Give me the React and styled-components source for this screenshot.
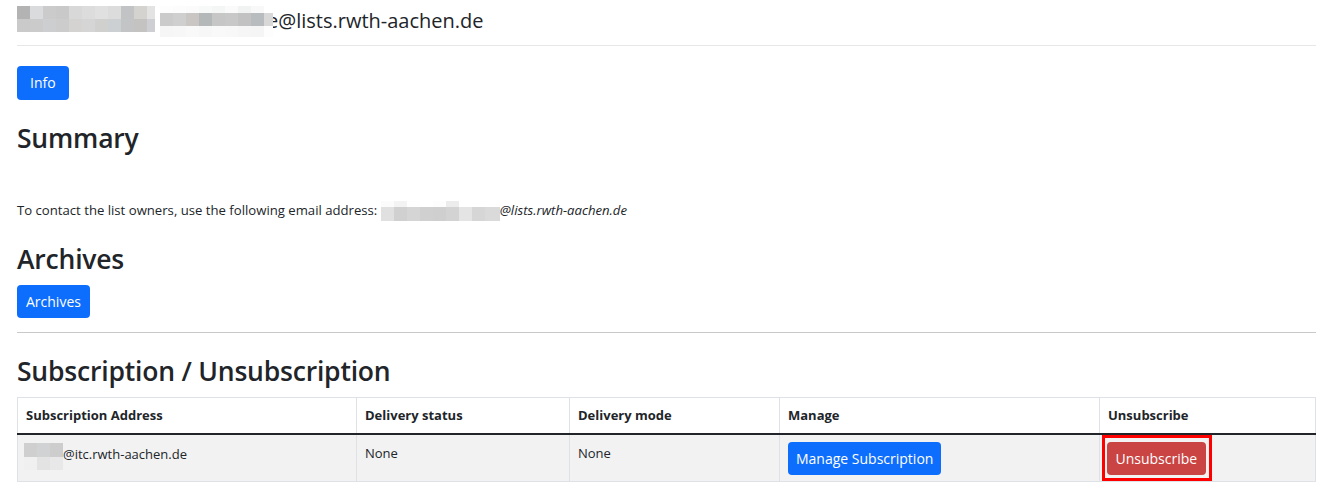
import React from "react";
import styled, { createGlobalStyle } from "styled-components";

const FONT = `"Open Sans", "Noto Sans", "Liberation Sans", sans-serif`;

const GlobalStyle = createGlobalStyle`
  html, body { margin: 0; padding: 0; background: #fff; }
  body {
    font-family: ${FONT};
    color: #212529;
    font-size: 14px;
    line-height: 1.5;
  }
  * { box-sizing: border-box; }
`;

const Page = styled.div`
  padding: 0 20px 0 17px;
`;

const TitleRow = styled.div`
  display: flex;
  align-items: center;
  height: 46px;
  padding-bottom: 4px;
  border-bottom: 1px solid #e7e7e7;
`;

const TitleText = styled.span`
  font-size: 20px;
  font-weight: 400;
  line-height: 1.2;
  margin-left: ${(p) => p.$overlap || 0}px;
  position: relative;
  z-index: 0;
`;

const MosaicBox = styled.span`
  display: inline-flex;
  flex-direction: column;
  flex: none;
  vertical-align: middle;
  position: relative;
  z-index: 1;
  margin-right: ${(p) => p.$gap || 0}px;
  margin-left: ${(p) => p.$ml || 0}px;
  margin-top: ${(p) => p.$top || 0}px;
`;

const MosaicRow = styled.span`
  display: flex;
  height: ${(p) => p.$h}px;
`;

const MosaicCell = styled.span`
  display: block;
  height: 100%;
  width: ${(p) => p.$w}px;
  background: ${(p) => p.$c};
`;

function Mosaic({ rows, gap, top, ml }) {
  return (
    <MosaicBox $gap={gap} $top={top} $ml={ml} aria-hidden="true">
      {rows.map((r, i) => (
        <MosaicRow key={i} $h={r.h}>
          {r.cells.map((c, j) => (
            <MosaicCell key={j} $w={c[1] || 13} $c={"#" + c[0]} />
          ))}
        </MosaicRow>
      ))}
    </MosaicBox>
  );
}

const Button = styled.button`
  display: inline-block;
  border: 0;
  border-radius: 4px;
  height: ${(p) => p.$h || 34}px;
  padding: 0 ${(p) => p.$px || 11}px;
  font-family: ${FONT};
  font-size: 14px;
  line-height: ${(p) => p.$h || 34}px;
  color: #fff;
  background: ${(p) => (p.$variant === "danger" ? "#c94442" : "#0d6efd")};
  cursor: pointer;
  margin-top: ${(p) => p.$mt || 0}px;
  vertical-align: top;
`;

const Heading = styled.h2`
  margin: ${(p) => p.$mt || 0}px 0 ${(p) => p.$mb || 0}px;
  font-size: 26.5px;
  font-weight: 600;
  line-height: 32px;
  letter-spacing: -0.2px;
`;

const Para = styled.p`
  margin: ${(p) => p.$mt || 0}px 0 0;
  font-size: 13.15px;
  line-height: 21px;
  display: flex;
  align-items: center;
`;

const Mail = styled.em`
  font-style: italic;
`;

const Rule = styled.hr`
  margin: 14px 0 0;
  border: 0;
  border-top: 1px solid #c9c9c9;
`;

const Table = styled.table`
  width: 100%;
  margin-top: 10px;
  border-collapse: collapse;
  border: 1px solid #dee2e6;
  font-size: 13px;
  table-layout: fixed;
`;

const Th = styled.th`
  text-align: left;
  font-weight: 700;
  padding: 1px 8px 0;
  height: 36px;
  border: 1px solid #dee2e6;
  border-bottom: 2px solid #212529;
  line-height: 21px;
`;

const BodyRow = styled.tr`
  background: #f2f2f2;
`;

const Td = styled.td`
  vertical-align: top;
  padding: ${(p) => (p.$tight ? "0 8px 0 0" : p.$btn ? "7px 8px 0" : "8px 8px 0")};
  height: 47px;
  border: 1px solid #dee2e6;
  line-height: 21px;
`;

const AddressCell = styled.span`
  display: flex;
  align-items: flex-start;
`;

const AddrText = styled.span`
  margin-top: 1px;
`;

const Highlight = styled.div`
  display: flex;
  width: fit-content;
  margin-left: 2px;
  border: 3px solid #ff0000;
  padding: 4px 3px 3px 2px;
`;

const head1 = [
  { h: 13, cells: [["b3b3b3"], ["dadbdc"], ["cbcbcb"], ["c9c9c9"], ["d8d8d8"], ["dcdcdc"], ["dfe0df"], ["dcdcdc"], ["c2c3c4"], ["d4d3d0"], ["e3e3e3", 8]] },
  { h: 13, cells: [["cacaca"], ["cbcbcb"], ["ccced0"], ["cdcccc"], ["d5d2d2"], ["d5d5d5"], ["d0d0cf"], ["cdd0d2"], ["c3c4c5"], ["c5c3c1"], ["cdcfd2", 8]] },
];
const head2 = [
  { h: 7, cells: [["fdfdfd"], ["fcfcfc"], ["fbfbfb"], ["f7f8f8"], ["f4f5f5"], ["fafafa"], ["f1f2f2"], ["f8f8f8"], ["ffffff", 9]] },
  { h: 13, cells: [["cbcbcb"], ["cfcfcf"], ["cac6c4"], ["b5b8b9"], ["c6c6c6"], ["c8c8c8"], ["c2c2c2"], ["b9bcbe"], ["d8d8d8", 9]] },
  { h: 11, cells: [["f6f6f6"], ["f7f7f7"], ["f9f9f9"], ["f7f7f7"], ["f9f9f9"], ["f8f8f8"], ["f6f6f6"], ["f5f5f5"], ["fdfdfd", 9]] },
];
const paraMosaic = [
  { h: 6, cells: [["fbfbfb"], ["f3f3f3"], ["fefefe"], ["ffffff"], ["fdfdfd"], ["ececec"], ["ffffff"], ["ffffff"], ["ffffff", 15]] },
  { h: 14, cells: [["e0e0e0"], ["d0d0d0"], ["d5d5d5"], ["d0d0d0"], ["cfcfcf"], ["d3d3d3"], ["e4e4e4"], ["d6d6d6"], ["dadada", 15]] },
];
const addrMosaic = [
  { h: 14, cells: [["cfcfcf"], ["d0d2d3"], ["cdcdcd"]] },
  { h: 13, cells: [["f0f0f0"], ["e3e3e3"], ["e8e8e8"]] },
];

export default function App() {
  return (
    <>
      <GlobalStyle />
      <Page>
        <TitleRow>
          <Mosaic rows={head1} gap={5} top={-3} />
          <Mosaic rows={head2} top={2} />
          <TitleText $overlap={-6}>e@lists.rwth-aachen.de</TitleText>
        </TitleRow>

        <Button $mt={20} $px={13}>Info</Button>

        <Heading $mt={22}>Summary</Heading>

        <Para $mt={46}>
          To contact the list owners, use the following email address:&nbsp;
          <Mosaic rows={paraMosaic} />
          <Mail>@lists.rwth-aachen.de</Mail>
        </Para>

        <Heading $mt={22}>Archives</Heading>
        <Button $mt={10} $px={9} $h={33}>Archives</Button>

        <Rule />

        <Heading $mt={22}>Subscription / Unsubscription</Heading>

        <Table>
          <colgroup>
            <col style={{ width: 339 }} />
            <col style={{ width: 213 }} />
            <col style={{ width: 210 }} />
            <col style={{ width: 320 }} />
            <col />
          </colgroup>
          <thead>
            <tr>
              <Th>Subscription Address</Th>
              <Th>Delivery status</Th>
              <Th>Delivery mode</Th>
              <Th>Manage</Th>
              <Th>Unsubscribe</Th>
            </tr>
          </thead>
          <tbody>
            <BodyRow>
              <Td>
                <AddressCell>
                  <Mosaic rows={addrMosaic} ml={-2} />
                  <AddrText>@itc.rwth-aachen.de</AddrText>
                </AddressCell>
              </Td>
              <Td>None</Td>
              <Td>None</Td>
              <Td $btn>
                <Button $px={8} $h={33}>Manage Subscription</Button>
              </Td>
              <Td $tight>
                <Highlight>
                  <Button $variant="danger" $px={8.5} $h={33}>Unsubscribe</Button>
                </Highlight>
              </Td>
            </BodyRow>
          </tbody>
        </Table>
      </Page>
    </>
  );
}
